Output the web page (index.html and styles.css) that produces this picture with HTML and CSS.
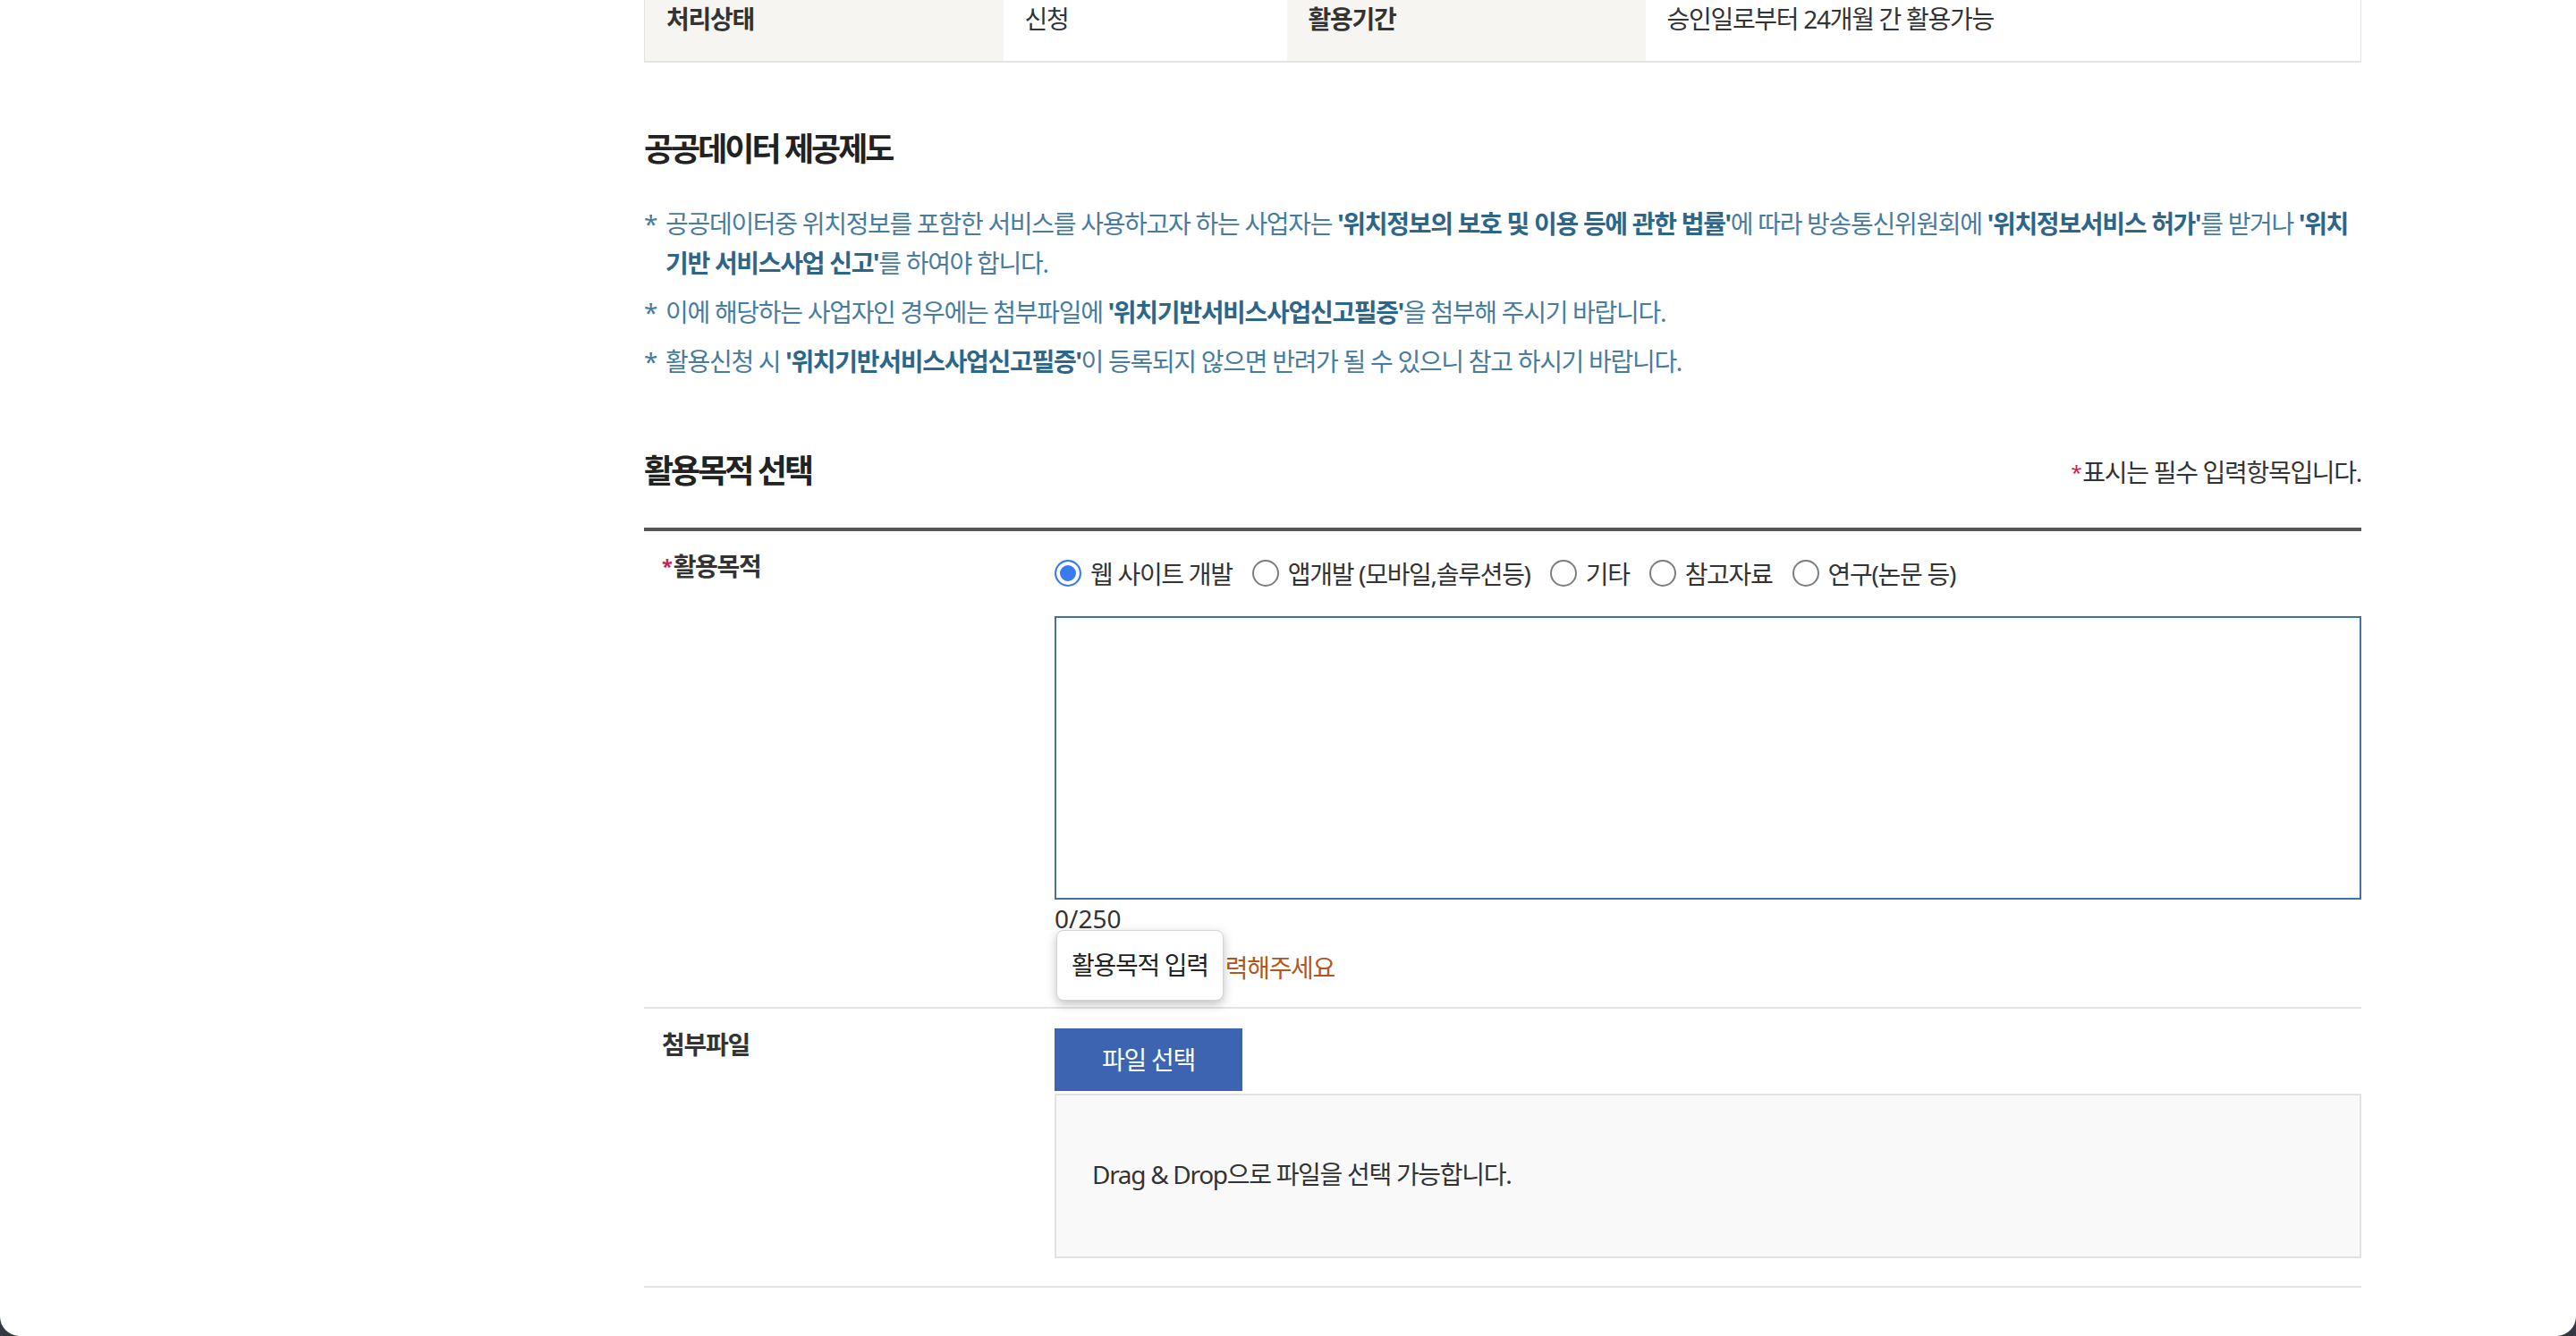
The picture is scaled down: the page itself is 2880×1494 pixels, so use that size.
FILE: index.html
```html
<!DOCTYPE html>
<html lang="ko">
<head>
  <meta charset="UTF-8">
  <meta name="viewport" content="width=device-width, initial-scale=1.0">
  <title>활용신청</title>
  <link rel="stylesheet" href="styles.css">
</head>
<body>
  <div class="content">
    <table class="info-table">
      <colgroup>
        <col class="col-th">
        <col class="col-short">
        <col class="col-th">
        <col>
      </colgroup>
      <tr>
        <th>처리상태</th>
        <td>신청</td>
        <th>활용기간</th>
        <td>승인일로부터 24개월 간 활용가능</td>
      </tr>
    </table>

    <h3 class="sec-title first">공공데이터 제공제도</h3>
    <ul class="notice">
      <li>
        <span class="mark">*</span>
        <p>공공데이터중 위치정보를 포함한 서비스를 사용하고자 하는 사업자는 <strong>'위치정보의 보호 및 이용 등에 관한 법률'</strong>에 따라 방송통신위원회에 <strong>'위치정보서비스 허가'</strong>를 받거나 <strong>'위치기반 서비스사업 신고'</strong>를 하여야 합니다.</p>
      </li>
      <li>
        <span class="mark">*</span>
        <p>이에 해당하는 사업자인 경우에는 첨부파일에 <strong>'위치기반서비스사업신고필증'</strong>을 첨부해 주시기 바랍니다.</p>
      </li>
      <li>
        <span class="mark">*</span>
        <p>활용신청 시 <strong>'위치기반서비스사업신고필증'</strong>이 등록되지 않으면 반려가 될 수 있으니 참고 하시기 바랍니다.</p>
      </li>
    </ul>

    <div class="sec-head">
      <h3 class="sec-title">활용목적 선택</h3>
      <p class="req-note"><span class="req">*</span>표시는 필수 입력항목입니다.</p>
    </div>

    <div class="form-table">
      <div class="form-row">
        <div class="form-label"><span class="req">*</span>활용목적</div>
        <div class="form-field">
          <div class="radio-group">
            <label><input type="radio" name="purpose" checked>웹 사이트 개발</label>
            <label><input type="radio" name="purpose">앱개발 (모바일,솔루션등)</label>
            <label><input type="radio" name="purpose">기타</label>
            <label><input type="radio" name="purpose">참고자료</label>
            <label><input type="radio" name="purpose">연구(논문 등)</label>
          </div>
          <textarea class="purpose-input" title="활용목적 입력"></textarea>
          <div class="field-help">
            <div class="count">0/250</div>
            <p class="error-msg">활용목적을 입력해주세요</p>
            <!-- 브라우저 title 툴팁 -->
            <div class="tooltip">활용목적 입력</div>
          </div>
        </div>
      </div>

      <div class="form-row">
        <div class="form-label file-label">첨부파일</div>
        <div class="form-field file-field">
          <button class="file-btn">파일 선택</button>
          <div class="drop-zone">Drag &amp; Drop으로 파일을 선택 가능합니다.</div>
        </div>
      </div>
    </div>
  </div>
</body>
</html>
```

FILE: styles.css
```css
:root {
  --text-main: #333;
  --text-dark: #222;
  --line: #e4e4e4;
  --th-bg: #f6f5f1;
  --notice: #477c9f;
  --notice-strong: #2c6688;
  --req: #c0245a;
  --blue: #3c64b1;
}

* {
  box-sizing: border-box;
}

html {
  background: #343840;
}

body {
  margin: 0;
  height: 1494px;
  overflow: hidden;
  background: #fff;
  border-radius: 0 0 22px 22px;
  font-family: "Noto Sans", "Noto Sans CJK KR", sans-serif;
  font-size: 28px;
  letter-spacing: -1.3px;
  color: var(--text-main);
}

.content {
  width: 1920px;
  margin-left: 720px;
}

/* 상단 정보 테이블 (스크롤된 상태) */
.info-table {
  width: 100%;
  margin-top: -25px;
  border-collapse: collapse;
  table-layout: fixed;
}

.col-th {
  width: 401px;
}

.col-short {
  width: 317px;
}

.info-table th,
.info-table td {
  padding: 24px 24px 25px;
  line-height: 44px;
  text-align: left;
  vertical-align: top;
  border-bottom: 2px solid var(--line);
}

.info-table th {
  background: var(--th-bg);
  font-weight: 700;
}

.info-table th:first-child {
  border-left: 1px solid var(--line);
}

.info-table td:last-child {
  border-right: 1px solid var(--line);
}

.sec-title {
  margin: 0;
  font-size: 36px;
  letter-spacing: -3px;
  line-height: 50px;
  font-weight: 700;
  color: var(--text-dark);
}

.sec-title.first {
  margin-top: 72px;
}

.notice {
  list-style: none;
  margin: 36px 0 0;
  padding: 0;
  color: var(--notice);
}

.notice li {
  display: flex;
  line-height: 44px;
  margin-bottom: 11px;
}

.notice .mark {
  flex: none;
  width: 24px;
}

.notice p {
  margin: 0;
}

.notice strong {
  color: var(--notice-strong);
}

.sec-head {
  display: flex;
  justify-content: space-between;
  align-items: center;
  margin-top: 76px;
  padding-bottom: 38px;
}

.req-note {
  margin: 0;
  line-height: 44px;
}

.req {
  color: var(--req);
  font-size: 22px;
  vertical-align: 3px;
  margin-right: 2px;
}

.form-table {
  border-top: 4px solid #555;
}

.form-row {
  display: grid;
  grid-template-columns: 459px 1fr;
  border-bottom: 2px solid var(--line);
}

.form-label {
  padding: 16px 20px;
  line-height: 44px;
  font-weight: 700;
}

.form-field {
  padding: 25px 0 22px;
}

.radio-group {
  display: flex;
  align-items: center;
  height: 44px;
}

.radio-group label {
  display: flex;
  align-items: center;
  margin-right: 22px;
}

.radio-group input {
  appearance: none;
  -webkit-appearance: none;
  width: 30px;
  height: 30px;
  margin: 0 10px 0 0;
  border: 2px solid #7d7d7d;
  border-radius: 50%;
  background: #fff;
}

.radio-group input:checked {
  border-color: #3a7af0;
  background: #3a7af0;
  box-shadow: inset 0 0 0 4px #fff;
}

.purpose-input {
  display: block;
  width: 100%;
  height: 317px;
  margin-top: 26px;
  border: 2px solid #4470a8;
  resize: none;
  outline: none;
  font: inherit;
}

.field-help {
  position: relative;
}

.count {
  line-height: 42px;
  letter-spacing: 0;
}

.error-msg {
  margin: 12px 0 0;
  padding-left: 38px;
  line-height: 44px;
  color: #b4561c;
}

.tooltip {
  position: absolute;
  left: 2px;
  top: 34px;
  padding: 16px 16px 17px;
  line-height: 44px;
  background: #fff;
  color: var(--text-dark);
  border: 1px solid #d4d4d4;
  border-radius: 8px;
  box-shadow: 0 4px 12px rgba(0, 0, 0, 0.25);
}

.file-label {
  padding-top: 18px;
}

.file-field {
  padding: 22px 0 31px;
}

.file-btn {
  display: block;
  width: 210px;
  height: 70px;
  padding-bottom: 4px;
  border: none;
  background: var(--blue);
  color: #fff;
  font: inherit;
  letter-spacing: -1.3px;
  cursor: pointer;
}

.drop-zone {
  display: flex;
  align-items: center;
  height: 184px;
  margin-top: 3px;
  padding: 0 40px 6px;
  background: #f9f9f9;
  border: 2px solid #e2e2e2;
}
```
